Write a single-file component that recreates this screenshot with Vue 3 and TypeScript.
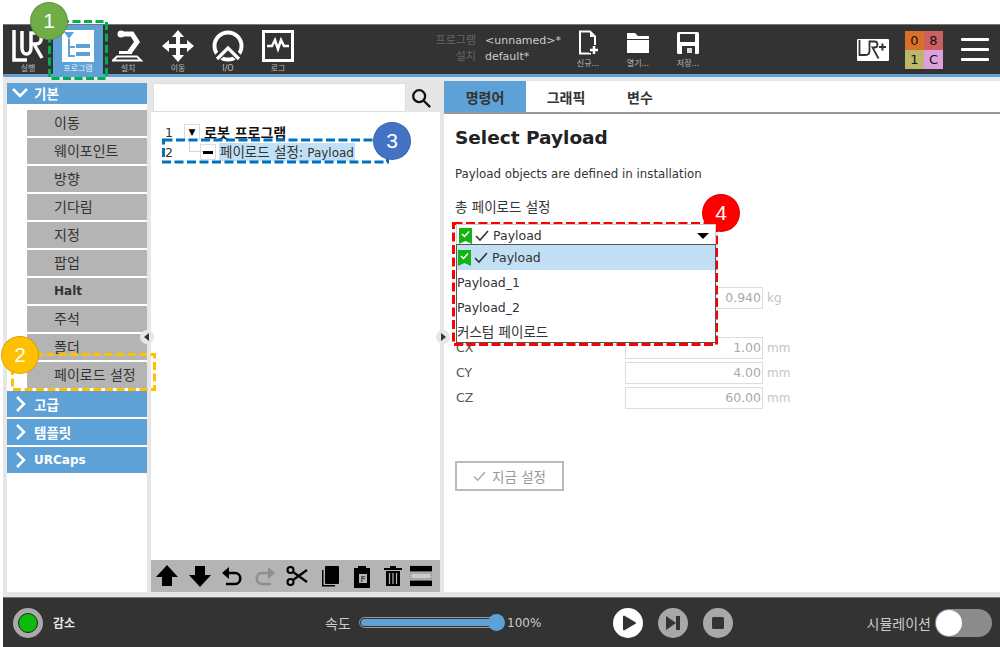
<template>
  <div class="screen">
    <header class="topbar">
      <div class="nav">
        <div v-for="item in navItems" :key="item.label" class="nav-item" :class="{ active: item.label === '프로그램' }">
          <svg class="nav-icon" viewBox="0 0 32 32" v-html="item.icon"></svg>
          <span class="nav-label">{{ item.label }}</span>
        </div>
      </div>
      <div class="file-info">
        <div class="file-labels"><span>프로그램</span><span>설치</span></div>
        <div class="file-names"><span>&lt;unnamed&gt;*</span><span>default*</span></div>
      </div>
      <div class="file-actions">
        <div v-for="action in fileActions" :key="action.label" class="file-action">
          <svg viewBox="0 0 26 26" v-html="action.icon"></svg>
          <span>{{ action.label }}</span>
        </div>
      </div>
      <div class="top-right">
        <svg class="urplus" viewBox="0 0 32 22">
          <rect width="32" height="22" rx="1" fill="#fff" />
          <path d="M2.500 1v15h6c3 0 4-2 4-4V2.500h5c4 0 4 6 0 6h-2l6 11" fill="none" stroke="#333" stroke-width="1.800" />
          <path d="M22 8h7M25.500 4.500v7" stroke="#333" stroke-width="2" />
        </svg>
        <div class="status-grid">
          <span class="s0">0</span><span class="s8">8</span><span class="s1">1</span><span class="sc">C</span>
        </div>
        <div class="burger"><i></i><i></i><i></i></div>
      </div>
    </header>

    <main class="content">
      <aside class="sidebar">
        <div class="group-head"><svg viewBox="0 0 20 20"><path d="M3 6l7 7 7-7" /></svg>기본</div>
        <div class="items">
          <div v-for="name in basicItems" :key="name" class="item" :class="{ strong: name === 'Halt' }">{{ name }}</div>
        </div>
        <div v-for="g in otherGroups" :key="g" class="group-head closed" :class="{ latin: g === 'URCaps' }">
          <svg viewBox="0 0 20 20"><path d="M7 3l7 7-7 7" /></svg>{{ g }}
        </div>
        <span class="handle handle-left"></span>
      </aside>

      <section class="tree-panel">
        <div class="search">
          <div class="search-input"></div>
          <svg viewBox="0 0 24 24"><circle cx="10" cy="10" r="6.500" /><path d="M15 15l7 7" /></svg>
        </div>
        <div class="tree">
          <div class="tree-row first">
            <span class="line-no">1</span>
            <span class="node-box">▼</span>
            <strong>로봇 프로그램</strong>
          </div>
          <div class="tree-row second">
            <span class="line-no">2</span>
            <span class="connector"></span>
            <span class="node-box"><i class="minus"></i></span>
            <span class="selected"><span class="ko-text">페이로드 설정:</span> Payload</span>
          </div>
        </div>
        <div class="tools">
          <svg viewBox="0 0 24 24" class="tool"><path d="M12 1L23 13h-6v9H7v-9H1z" /></svg>
          <svg viewBox="0 0 24 24" class="tool"><path d="M7 2h10v9h6L12 23 1 11h6z" /></svg>
          <svg viewBox="0 0 24 24" class="tool"><path d="M9 3L2 9l7 6z" /><path d="M8 9h7c7 0 7 11 0 11H6" fill="none" stroke="#000" stroke-width="2.600" /></svg>
          <svg viewBox="0 0 24 24" class="tool off"><path d="M15 3l7 6-7 6z" /><path d="M16 9H9c-7 0-7 11 0 11h9" fill="none" stroke="#8e8e8e" stroke-width="2.600" /></svg>
          <svg viewBox="0 0 24 24" class="tool"><circle cx="5.500" cy="6" r="3" fill="none" stroke="#000" stroke-width="2" /><circle cx="5.500" cy="18" r="3" fill="none" stroke="#000" stroke-width="2" /><path d="M8 8l14 10M8 16L22 6" stroke="#000" stroke-width="2.200" /></svg>
          <svg viewBox="0 0 24 24" class="tool"><rect x="7" y="2" width="14" height="18" rx="1" /><path d="M4 6h1.500v15H17v1.500H4z" /></svg>
          <svg viewBox="0 0 24 24" class="tool"><path d="M4 4h4V2h8v2h4v20H4z" /><rect x="9" y="10" width="8" height="9" fill="#b4b4b4" /><path d="M11 12h4v1.500h-2.500V14H15v1.200h-2.500V18H11z" fill="#555" /></svg>
          <svg viewBox="0 0 24 24" class="tool trash"><path d="M9 2h6v2h6v2H3V4h6z" /><path d="M5 7h14v15H5z" /><path d="M8.500 9v11M12 9v11M15.500 9v11" stroke="#b4b4b4" stroke-width="1.200" /></svg>
          <svg viewBox="0 0 24 24" class="tool wide"><rect x="0" y="1" width="24" height="6" /><rect x="0" y="17" width="24" height="6" /><rect x="1" y="9" width="22" height="6" fill="#ccc" stroke="#333" stroke-dasharray="1 1" stroke-width="0.600" /></svg>
        </div>
      </section>

      <section class="detail">
        <nav class="tabs">
          <span class="tab on">명령어</span>
          <span class="tab">그래픽</span>
          <span class="tab">변수</span>
        </nav>
        <div class="pane">
          <h1>Select Payload</h1>
          <p class="desc">Payload objects are defined in installation</p>
          <div class="select-label">총 페이로드 설정</div>
          <div class="select">
            <div class="select-head">
              <svg class="bookmark" viewBox="0 0 13 16"><path d="M0 0h13v16l-6.500-3L0 16z" fill="#12b312" /><path d="M3 6l2.500 2.500L10 3.500" fill="none" stroke="#fff" stroke-width="1.500" /></svg>
              <svg class="check" viewBox="0 0 14 12"><path d="M1 6l4 4 8-9" /></svg>Payload
              <span class="caret"></span>
            </div>
            <ul class="options">
              <li class="picked">
                <svg class="bookmark" viewBox="0 0 13 16"><path d="M0 0h13v16l-6.500-3L0 16z" fill="#12b312" /><path d="M3 6l2.500 2.500L10 3.500" fill="none" stroke="#fff" stroke-width="1.500" /></svg>
                <svg class="check" viewBox="0 0 14 12"><path d="M1 6l4 4 8-9" /></svg>Payload
              </li>
              <li>Payload_1</li>
              <li>Payload_2</li>
              <li class="ko">커스텀 페이로드</li>
            </ul>
          </div>
          <div class="fields">
            <div v-for="f in fields" :key="f.value" class="field" :class="f.cls">
              <label>{{ f.name }}</label>
              <span class="value">{{ f.value }}</span>
              <span class="unit">{{ f.unit }}</span>
            </div>
          </div>
          <button class="set-now"><svg viewBox="0 0 14 12"><path d="M1 6l4 4 8-9" /></svg>지금 설정</button>
        </div>
        <span class="handle handle-right"></span>
      </section>
    </main>

    <footer class="bottombar">
      <div class="power"><span class="power-dot"><i></i></span><b>감소</b></div>
      <div class="speed">
        <span class="speed-label">속도</span>
        <div class="slider"><div class="slider-fill"></div><span class="knob"></span></div>
        <span class="speed-value">100%</span>
      </div>
      <div class="controls">
        <span class="ctl white"><svg viewBox="0 0 30 30"><path d="M11 8.500v13l11-6.500z" fill="#333" stroke="#333" stroke-width="2" stroke-linejoin="round" /></svg></span>
        <span class="ctl"><svg viewBox="0 0 30 30"><path d="M8 8v14l10-7zM18 8h4v14h-4z" fill="#333" /></svg></span>
        <span class="ctl"><svg viewBox="0 0 30 30"><rect x="9" y="9" width="12" height="12" rx="1.500" fill="#333" /></svg></span>
      </div>
      <div class="sim">
        <span>시뮬레이션</span>
        <div class="toggle"><i></i></div>
      </div>
    </footer>

    <!-- callouts laid over the screenshot -->
    <svg class="marks" viewBox="0 0 1000 647">
      <rect x="49.500" y="21.500" width="57" height="57" stroke="#00b050" stroke-dasharray="8 3.500" />
      <rect x="12.500" y="354.500" width="142" height="35" stroke="#ffc000" stroke-dasharray="8 3.500" />
      <rect x="163.500" y="140" width="224" height="22" stroke="#0070c0" stroke-dasharray="9 3.500" />
      <rect x="453.500" y="223.500" width="263" height="121" stroke="#f00" stroke-dasharray="9 3.500" />
    </svg>
    <span class="badge b1">1</span>
    <span class="badge b2">2</span>
    <span class="badge b3">3</span>
    <span class="badge b4">4</span>
  </div>
</template>

<script setup lang="ts">
interface NavItem {
  label: string
  icon: string
}

const navItems: NavItem[] = [
  {
    label: '실행',
    icon: '<path d="M2 0v30h13" fill="none" stroke="#fff" stroke-width="3.500"/><path d="M10 1v17c0 8 9 8 9 0V3h5c7 0 7 11 0 11h-2l8 14" fill="none" stroke="#fff" stroke-width="3.500"/>',
  },
  {
    label: '프로그램',
    icon: '<rect x="0" y="0" width="32" height="32" fill="#fff"/><path d="M2 2h10L7 9z" fill="#5da1d6"/><path d="M7 9v17h6M7 17h6" stroke="#5da1d6" stroke-width="2" fill="none"/><rect x="14" y="14" width="14" height="4" fill="#5da1d6"/><rect x="14" y="22" width="14" height="4" fill="#5da1d6"/>',
  },
  {
    label: '설치',
    icon: '<circle cx="9" cy="4" r="3.500" fill="#fff"/><path d="M9 4h11l5 8-8 11" fill="none" stroke="#fff" stroke-width="5"/><path d="M7 21h13v3H7z" fill="#fff"/><path d="M5 26.500h20l4 4H1z" fill="none" stroke="#fff" stroke-width="2"/>',
  },
  {
    label: '이동',
    icon: '<path d="M16 0l6 7h-4v7h7v-4l7 6-7 6v-4h-7v7h4l-6 7-6-7h4v-7H7v4l-7-6 7-6v4h7V7h-4z" fill="#fff"/>',
  },
  {
    label: 'I/O',
    icon: '<circle cx="16" cy="16" r="13.500" fill="none" stroke="#fff" stroke-width="4"/><path d="M2 31L16 17l14 14" fill="none" stroke="#333" stroke-width="7"/><path d="M5 29L16 18l11 11" fill="none" stroke="#fff" stroke-width="3.200"/><path d="M11 29.500h10" stroke="#fff" stroke-width="3"/>',
  },
  {
    label: '로그',
    icon: '<rect x="1.500" y="1.500" width="29" height="29" fill="none" stroke="#fff" stroke-width="3"/><path d="M5 16h5l3-6 3 9 3-9 3 6h5" fill="none" stroke="#fff" stroke-width="2.500"/>',
  },
]

const fileActions: NavItem[] = [
  {
    label: '신규...',
    icon: '<path d="M5 1.500h10l5 5v17H5z" fill="none" stroke="#fff" stroke-width="2"/><path d="M15 1v6h6z" fill="#fff"/><path d="M14 20h10M19 15v10" stroke="#333" stroke-width="6"/><path d="M15 20h8M19 16v8" stroke="#fff" stroke-width="2.500"/>',
  },
  {
    label: '열기...',
    icon: '<path d="M2 3h8l3 3h11v3H2z" fill="#fff"/><path d="M2 10h22v13H2z" fill="#fff"/>',
  },
  {
    label: '저장...',
    icon: '<rect x="2" y="2" width="22" height="22" rx="1.500" fill="#fff"/><rect x="5" y="4" width="15" height="8" fill="#333"/><rect x="7" y="16" width="13" height="8" fill="#333"/><rect x="12" y="18" width="5" height="5" fill="#ddd"/>',
  },
]

const basicItems = ['이동', '웨이포인트', '방향', '기다림', '지정', '팝업', 'Halt', '주석', '폴더', '페이로드 설정']
const otherGroups = ['고급', '템플릿', 'URCaps']

const fields = [
  { name: '', value: '0.940', unit: 'kg', cls: 'mass' },
  { name: 'CX', value: '1.00', unit: 'mm', cls: '' },
  { name: 'CY', value: '4.00', unit: 'mm', cls: '' },
  { name: 'CZ', value: '60.00', unit: 'mm', cls: '' },
]
</script>

<style>
html,
body {
  margin: 0;
  background: #fff;
}
</style>

<style scoped>
.screen {
  position: relative;
  width: 1000px;
  height: 647px;
  padding: 24px 0 0 3px;
  box-sizing: border-box;
  overflow: hidden;
  background: #fff;
  font-family: "DejaVu Sans", "Noto Sans CJK KR", sans-serif;
  color: #333;
}

.topbar {
  display: flex;
  height: 53px;
  box-sizing: border-box;
  background: #333;
  border-top: 1px solid #777;
  border-bottom: 3px solid #5da1d6;
}

.nav {
  display: flex;
  width: 300px;
}
.nav-item {
  width: 50px;
  display: flex;
  flex-direction: column;
  align-items: center;
  padding-top: 5px;
  box-sizing: border-box;
}
.nav-item.active {
  background: #5da1d6;
}
.nav-icon {
  width: 32px;
  height: 32px;
}
.nav-label {
  margin-top: 2px;
  font-size: 8px;
  line-height: 10px;
  color: #bbb;
}
.active .nav-label {
  color: #e8f1f8;
}

.file-info {
  display: flex;
  gap: 9px;
  margin-left: 130px;
  padding-top: 8px;
  font-size: 11px;
  line-height: 15.500px;
}
.file-labels,
.file-names {
  display: flex;
  flex-direction: column;
}
.file-labels {
  align-items: flex-end;
  width: 43px;
  color: #666;
}
.file-names {
  width: 78px;
  color: #ccc;
}

.file-actions {
  display: flex;
}
.file-action {
  width: 50px;
  display: flex;
  flex-direction: column;
  align-items: center;
  padding-top: 5px;
  font-size: 8px;
  color: #bbb;
}
.file-action svg {
  width: 26px;
  height: 26px;
  margin-bottom: 1px;
}

.top-right {
  display: flex;
  align-items: center;
  margin-left: auto;
  padding-right: 11px;
}
.urplus {
  width: 32px;
  height: 22px;
}
.status-grid {
  display: grid;
  grid-template-columns: 19px 19px;
  grid-auto-rows: 19px;
  margin-left: 16px;
  font-size: 13px;
  line-height: 19px;
  text-align: center;
  color: #111;
}
.s0 { background: #d9702a; }
.s8 { background: #cc5f5f; }
.s1 { background: #bdb76b; }
.sc { background: #dda0dd; }
.burger {
  display: flex;
  flex-direction: column;
  gap: 7px;
  margin-left: 18px;
}
.burger i {
  display: block;
  width: 28px;
  height: 3px;
  background: #fff;
  border-radius: 1px;
}

.content {
  display: flex;
  height: 520px;
  background: #e6e6e6;
  padding: 6px 0 5px 4px;
  box-sizing: border-box;
}

.sidebar {
  position: relative;
  width: 140px;
  background: #fff;
  flex-shrink: 0;
}
.group-head {
  display: flex;
  align-items: center;
  height: 21px;
  box-sizing: border-box;
  padding: 0 0 1px 3px;
  gap: 4px;
  background: #5da1d6;
  color: #fff;
  font-size: 13.500px;
  font-weight: 700;
}
.group-head.closed {
  height: 26px;
  margin-bottom: 2px;
}
.group-head.latin {
  font-size: 12px;
}
.group-head svg {
  width: 20px;
  height: 20px;
  fill: none;
  stroke: #fff;
  stroke-width: 2.500;
}
.items {
  padding: 6px 0 1px 20px;
}
.item {
  height: 26px;
  margin-bottom: 2px;
  padding-left: 27px;
  background: #b4b4b4;
  font-size: 14px;
  line-height: 26px;
  color: #333;
}
.item.strong {
  font-size: 12px;
  font-weight: 700;
}

.handle {
  position: absolute;
  width: 14px;
  height: 14px;
  border-radius: 50%;
  background: #e6e6e6;
}
.handle::after {
  content: "";
  position: absolute;
  left: 4px;
  top: 3px;
  border: 4px solid transparent;
  border-left: 0;
  border-right: 5px solid #333;
}
.handle-left {
  right: -7px;
  top: 247px;
}
.handle-right {
  left: -8px;
  top: 249px;
}
.handle-right::after {
  border: 4px solid transparent;
  border-right: 0;
  border-left: 5px solid #333;
  left: 5px;
}

.tree-panel {
  display: flex;
  flex-direction: column;
  width: 289px;
  margin-left: 4px;
  background: #fff;
  flex-shrink: 0;
}
.search {
  display: flex;
  align-items: center;
  height: 29px;
  padding-left: 2px;
  background: #e6e6e6;
}
.search-input {
  width: 253px;
  height: 29px;
  box-sizing: border-box;
  background: #fff;
  border: 1px solid #ddd;
}
.search svg {
  width: 22px;
  height: 22px;
  margin-left: 2px;
  padding: 2px;
  box-sizing: content-box;
  fill: none;
  stroke: #111;
  stroke-width: 2.500;
}
.tree {
  flex: 1;
  padding: 10px 0 0 14px;
  font-size: 14px;
}
.tree-row {
  display: flex;
  align-items: center;
  height: 20px;
}
.line-no {
  width: 19px;
  font-size: 12.500px;
}
.node-box {
  display: flex;
  align-items: center;
  justify-content: center;
  width: 16px;
  height: 16px;
  border: 1px solid #ddd;
  box-sizing: border-box;
  margin-right: 4px;
  font-size: 9px;
  color: #000;
}
.first strong {
  color: #111;
}
.connector {
  width: 16px;
  height: 10px;
  margin-top: -10px;
  box-sizing: border-box;
  border-left: 1px solid #c9d6ee;
  border-bottom: 1px solid #c9d6ee;
  margin-left: 5px;
  margin-right: -5px;
}
.minus {
  display: block;
  width: 10px;
  height: 3px;
  background: #000;
}
.selected {
  background: #c2e0f5;
  padding: 0 1px;
  margin-left: -1px;
  height: 18px;
  line-height: 18px;
  font-size: 12px;
}
.ko-text {
  font-size: 13.500px;
}
.tools {
  display: flex;
  align-items: center;
  gap: 8.500px;
  height: 32px;
  padding-left: 4px;
  background: #b4b4b4;
}
.tool {
  width: 24px;
  height: 24px;
  fill: #000;
}
.tool.off {
  fill: #8e8e8e;
}
.tool.trash {
  margin-left: -2px;
}
.tool.wide {
  width: 22px;
  margin-left: -3px;
}

.detail {
  position: relative;
  display: flex;
  flex-direction: column;
  flex: 1;
  margin-left: 4px;
  margin-top: -2px;
}
.tabs {
  display: flex;
  height: 31px;
  background: #fff;
  border-bottom: 2px solid #999;
}
.tab {
  width: 80px;
  padding-top: 2px;
  text-align: center;
  font-size: 14px;
  font-weight: 700;
  line-height: 31px;
  color: #333;
}
.tab.on {
  width: 82px;
  background: #5da1d6;
}
.tab:nth-child(3) {
  width: 68px;
}
.pane {
  flex: 1;
  padding: 12px 0 0 11px;
  background: #fff;
  font-size: 12px;
}
h1 {
  margin: 0;
  font-size: 18.500px;
  line-height: 24px;
  font-weight: 700;
  color: #222;
}
.desc {
  margin: 16px 0 0;
  font-size: 11.800px;
  line-height: 16px;
}
.select-label {
  margin-top: 17px;
  font-size: 13.500px;
  line-height: 16px;
}
.select {
  position: relative;
  width: 260px;
  margin: 9px 0 0 1px;
  font-size: 12.500px;
  z-index: 1;
  background: #fff;
}
.select-head {
  display: flex;
  align-items: center;
  height: 20px;
  box-sizing: border-box;
  padding: 2px 0 0 2px;
  border: 1px solid #ccc;
  border-bottom: 0;
}
.caret {
  margin-left: auto;
  margin-right: 6px;
  border: 6px solid transparent;
  border-bottom: 0;
  border-top: 6px solid #000;
}
.bookmark {
  width: 13px;
  height: 16px;
  margin-right: 3px;
}
.check {
  width: 14px;
  height: 12px;
  margin-right: 4px;
  fill: none;
  stroke: #333;
  stroke-width: 1.600;
}
.options {
  list-style: none;
  margin: 0;
  padding: 0;
  height: 99px;
  box-sizing: border-box;
  border: 1px solid #555;
  background: #fff;
}
.options li {
  display: flex;
  align-items: center;
  height: 25px;
}
.options li.picked {
  padding-left: 1px;
  background: #c2e0f5;
}
.options li.ko {
  margin-top: -2px;
  font-size: 13.500px;
}
.fields {
  margin: -58px 0 0 1px;
}
.field {
  display: flex;
  align-items: center;
  height: 25px;
  color: #555;
  font-size: 12.500px;
}
.field label {
  width: 169px;
}
.value {
  width: 138px;
  height: 22px;
  box-sizing: border-box;
  border: 1px solid #ddd;
  padding-right: 1px;
  text-align: right;
  font-size: 12.500px;
  line-height: 20px;
  color: #aaa;
}
.unit {
  margin-left: 4px;
  font-size: 12px;
  color: #c4c4c4;
}
.mass {
  margin-bottom: 25px;
}
.set-now {
  display: flex;
  align-items: center;
  justify-content: center;
  width: 109px;
  height: 30px;
  margin-top: 51px;
  background: #fff;
  border: 2px solid #bbb;
  font-family: inherit;
  font-size: 13.500px;
  color: #999;
}
.set-now svg {
  width: 13px;
  height: 11px;
  margin-right: 6px;
  fill: none;
  stroke: #aaa;
  stroke-width: 1.600;
}

.bottombar {
  display: flex;
  align-items: center;
  height: 50px;
  background: #333;
  border-top: 1px solid #777;
  box-sizing: border-box;
  color: #ccc;
}
.power {
  display: flex;
  align-items: center;
  width: 322px;
  padding-left: 10px;
  box-sizing: border-box;
}
.power-dot {
  display: flex;
  align-items: center;
  justify-content: center;
  width: 30px;
  height: 30px;
  border-radius: 50%;
  background: #aaa;
}
.power-dot i {
  display: block;
  width: 20px;
  height: 20px;
  border-radius: 50%;
  background: #0cbb0c;
  border: 1px solid #222;
  box-sizing: border-box;
}
.power b {
  margin-left: 10px;
  font-size: 12px;
  color: #e8e8e8;
}
.speed {
  display: flex;
  align-items: center;
  width: 288px;
}
.speed-label {
  width: 34px;
  font-size: 14px;
}
.slider {
  position: relative;
  width: 137px;
  height: 11px;
  box-sizing: border-box;
  padding: 1px;
  border: 1px solid #999;
  border-radius: 6px;
}
.slider-fill {
  height: 100%;
  background: #5da1d6;
  border-radius: 4px;
}
.knob {
  position: absolute;
  right: -9.500px;
  top: -4px;
  width: 17px;
  height: 17px;
  border-radius: 50%;
  background: #5da1d6;
}
.speed-value {
  margin-left: 11px;
  font-size: 12px;
}
.controls {
  display: flex;
  gap: 15px;
}
.ctl {
  width: 30px;
  height: 30px;
  border-radius: 50%;
  background: #a8a8a8;
}
.ctl.white {
  background: #fff;
}
.ctl svg {
  display: block;
}
.sim {
  display: flex;
  align-items: center;
  gap: 4px;
  margin-left: auto;
  padding-right: 8px;
  font-size: 14px;
}
.toggle {
  width: 57px;
  height: 28px;
  border-radius: 14px;
  background: #8c8c8c;
  display: flex;
  align-items: center;
}
.toggle i {
  display: block;
  width: 26px;
  height: 26px;
  margin-left: 1px;
  border-radius: 50%;
  background: #fff;
}

.marks {
  position: absolute;
  left: 0;
  top: 0;
  width: 1000px;
  height: 647px;
  fill: none;
  stroke-width: 3;
  pointer-events: none;
}
.badge {
  position: absolute;
  width: 38px;
  height: 38px;
  border-radius: 50%;
  box-sizing: border-box;
  border: 1px solid rgba(0, 0, 0, 0.15);
  color: #fff;
  font-size: 21px;
  line-height: 36px;
  text-align: center;
  font-family: "Liberation Sans", sans-serif;
}
.b1 { left: 30px; top: 2px; background: #70ad47; }
.b2 { left: 1px; top: 336px; background: #ffc000; }
.b3 { left: 373px; top: 122px; background: #4472c4; }
.b4 { left: 702px; top: 194px; background: #f00; }
</style>
